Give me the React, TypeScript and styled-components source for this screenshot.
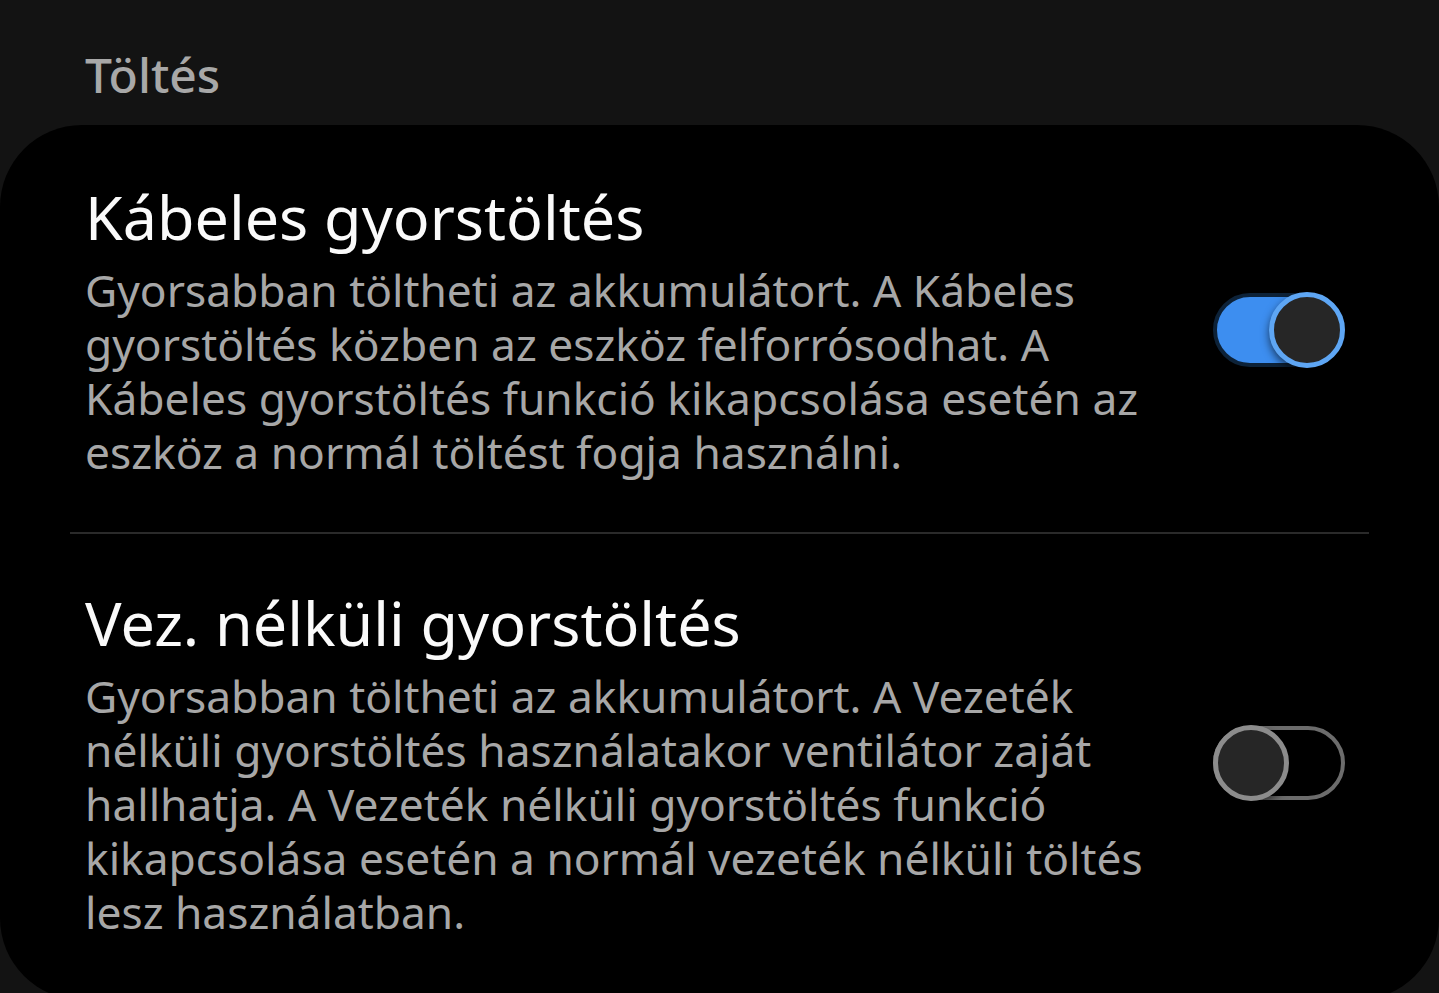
import React from "react";
import styled, { createGlobalStyle } from "styled-components";

const GlobalStyle = createGlobalStyle`
  html, body {
    margin: 0;
    padding: 0;
    background: #131313;
    font-family: "Noto Sans", "Open Sans", sans-serif;
    -webkit-font-smoothing: antialiased;
  }
`;

const Page = styled.div`
  width: 1439px;
  height: 993px;
  overflow: hidden;
  background: #131313;
`;

const SectionTitle = styled.h2`
  margin: 0;
  padding: 44px 0 0 85px;
  height: 125px;
  box-sizing: border-box;
  font-size: 48px;
  line-height: 62px;
  font-weight: 500;
  color: #a8a8a8;
`;

const Card = styled.div`
  background: #000;
  border-radius: 82px;
  min-height: 875px;
`;

const Row = styled.div<{ $top: number; $bottom: number }>`
  display: flex;
  align-items: center;
  padding: ${(p) => p.$top}px 94px ${(p) => p.$bottom}px 85px;
`;

const TextCol = styled.div`
  flex: 1;
`;

const Title = styled.div`
  font-size: 61px;
  line-height: 72px;
  color: #fafafa;
  margin-bottom: 10px;
`;

const Desc = styled.div`
  font-size: 44.3px;
  line-height: 54px;
  color: #a7a7a7;
  white-space: nowrap;
`;

const Divider = styled.div`
  height: 2px;
  margin: 0 70px;
  background: #2a2a2a;
`;

const Track = styled.div<{ $on: boolean }>`
  position: relative;
  flex: none;
  width: 132px;
  height: 74px;
  margin-left: 40px;
  box-sizing: border-box;
  border-radius: 37px;
  background: ${(p) => (p.$on ? "#3d8ef0" : "transparent")};
  border: 4px solid ${(p) => (p.$on ? "#0d2238" : "#6c6c6c")};
`;

const Knob = styled.div<{ $on: boolean }>`
  position: absolute;
  top: 50%;
  ${(p) => (p.$on ? "right: -4px;" : "left: -4px;")}
  width: 76px;
  height: 76px;
  margin-top: -38px;
  box-sizing: border-box;
  border-radius: 50%;
  background: #262626;
  border: 5px solid ${(p) => (p.$on ? "#5ea6f4" : "#8c8c8c")};
  box-shadow: 0 4px 8px rgba(0, 0, 0, 0.6);
`;

const Toggle = ({ on }: { on: boolean }) => (
  <Track $on={on}>
    <Knob $on={on} />
  </Track>
);

const settings = [
  {
    title: "Kábeles gyorstöltés",
    lines: [
      "Gyorsabban töltheti az akkumulátort. A Kábeles",
      "gyorstöltés közben az eszköz felforrósodhat. A",
      "Kábeles gyorstöltés funkció kikapcsolása esetén az",
      "eszköz a normál töltést fogja használni.",
    ],
    on: true,
    top: 56,
    bottom: 53,
  },
  {
    title: "Vez. nélküli gyorstöltés",
    lines: [
      "Gyorsabban töltheti az akkumulátort. A Vezeték",
      "nélküli gyorstöltés használatakor ventilátor zaját",
      "hallhatja. A Vezeték nélküli gyorstöltés funkció",
      "kikapcsolása esetén a normál vezeték nélküli töltés",
      "lesz használatban.",
    ],
    on: false,
    top: 53,
    bottom: 50,
  },
];

const App = () => (
  <Page>
    <GlobalStyle />
    <SectionTitle>Töltés</SectionTitle>
    <Card>
      {settings.map((s, i) => (
        <React.Fragment key={s.title}>
          {i > 0 && <Divider />}
          <Row $top={s.top} $bottom={s.bottom}>
            <TextCol>
              <Title>{s.title}</Title>
              <Desc>
                {s.lines.map((l, j) => (
                  <React.Fragment key={j}>
                    {l}
                    {j < s.lines.length - 1 && <br />}
                  </React.Fragment>
                ))}
              </Desc>
            </TextCol>
            <Toggle on={s.on} />
          </Row>
        </React.Fragment>
      ))}
    </Card>
  </Page>
);

export default App;
